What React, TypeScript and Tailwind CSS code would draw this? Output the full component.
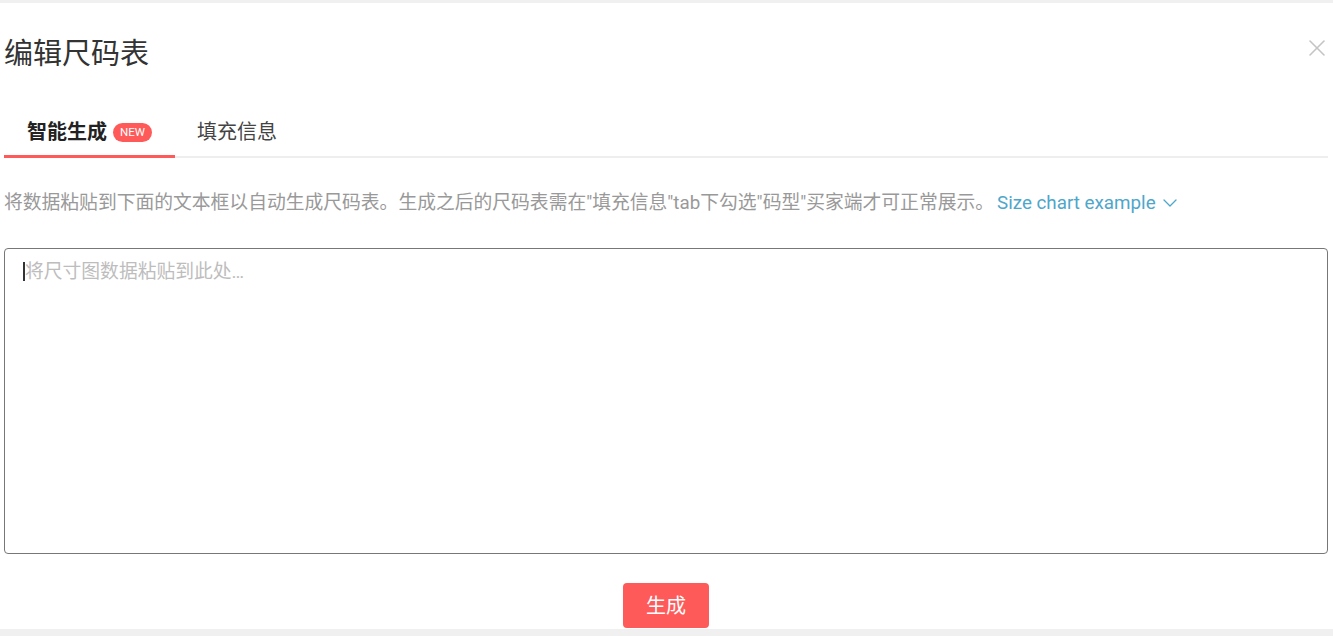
import { ChevronDown, X } from "lucide-react";

const App = () => {
    return (
        <div className="w-full h-[636px] bg-[#f0f0f0] pt-[3px] font-['Roboto','Noto_Sans_CJK_SC',sans-serif]">
            <div className="h-[626px] bg-white pl-[4px] pr-[5px] flex flex-col">
                {/* 标题 */}
                <div className="flex items-start justify-between h-[90px] pt-[35px]">
                    <h1 className="text-[29px] leading-[32px] text-[#333] font-normal">编辑尺码表</h1>
                    <button className="mt-[-4px] mr-[-3px] text-[#c4c4c4]">
                        <X size={28} strokeWidth={1.3} />
                    </button>
                </div>

                {/* 标签页 */}
                <div className="flex items-end h-[65px] border-b-2 border-[#eeeeee]">
                    <div className="relative flex items-center gap-[6px] px-[23px] h-full pb-[11px] self-end">
                        <span className="text-[20px] leading-[26px] font-bold text-[#222] mt-auto">智能生成</span>
                        <span className="mt-auto mb-[3px] h-[19px] px-[7px] rounded-full bg-[#ff5a5a] text-white text-[11.5px] leading-[19px]">NEW</span>
                        <div className="absolute left-0 right-0 bottom-[-2px] h-[3px] bg-[#ff5a5a]" />
                    </div>
                    <div className="flex items-end h-full px-[22px] pb-[11px]">
                        <span className="text-[20px] leading-[26px] text-[#444]">填充信息</span>
                    </div>
                </div>

                {/* 说明 */}
                <div className="flex items-center h-[88px] pt-[2px] text-[18.8px]">
                    <span className="text-[#999]">将数据粘贴到下面的文本框以自动生成尺码表。生成之后的尺码表需在"填充信息"tab下勾选"码型"买家端才可正常展示。</span>
                    <span className="ml-[3px] flex items-center gap-[2px] text-[#4ea6cb]">
                        Size chart example
                        <ChevronDown size={24} strokeWidth={1.3} />
                    </span>
                </div>

                {/* 输入框 */}
                <div className="relative h-[306px] mt-[2px]">
                    <textarea
                        className="w-full h-full resize-none rounded-[4px] border-[1.5px] border-[#777] px-[20px] pt-[10px] text-[18.8px] leading-[26px] text-[#333] placeholder:text-[#bdbdbd] outline-none"
                        placeholder="将尺寸图数据粘贴到此处…"
                    />
                    <span className="absolute left-[19px] top-[14px] w-[2px] h-[19px] bg-[#333]" />
                </div>

                {/* 按钮 */}
                <div className="flex justify-center pt-[29px]">
                    <button className="w-[86px] h-[45px] rounded-[4px] bg-[#ff5a5a] text-white text-[20px]">生成</button>
                </div>
            </div>
        </div>
    );
};

export default App;
